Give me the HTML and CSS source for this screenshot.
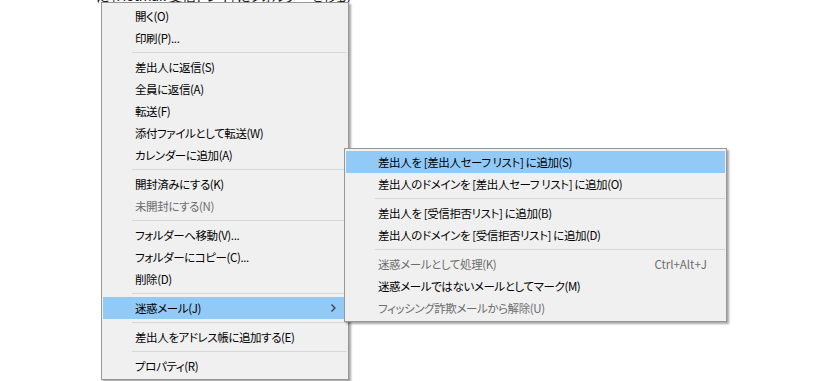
FILE: index.html
```
<!DOCTYPE html>
<html lang="ja">
<head>
<meta charset="utf-8">
<link rel="stylesheet" href="styles.css">
</head>
<body>
<div class="desk">
  <div class="bgline">に [Hotmail 受信トレイ] にフォルダーを移動</div>

  <div class="menu main-menu">
    <div class="item">開く(O)</div>
    <div class="item">印刷(P)...</div>
    <div class="sep"></div>
    <div class="item">差出人に返信(S)</div>
    <div class="item">全員に返信(A)</div>
    <div class="item">転送(F)</div>
    <div class="item">添付ファイルとして転送(W)</div>
    <div class="item">カレンダーに追加(A)</div>
    <div class="sep"></div>
    <div class="item">開封済みにする(K)</div>
    <div class="item disabled">未開封にする(N)</div>
    <div class="sep"></div>
    <div class="item">フォルダーへ移動(V)...</div>
    <div class="item">フォルダーにコピー(C)...</div>
    <div class="item">削除(D)</div>
    <div class="sep"></div>
    <div class="item active has-sub">迷惑メール(J)
      <svg class="chev" width="5" height="8" viewBox="0 0 5 8"><path d="M0.5 0.5 L4 4 L0.5 7.5" fill="none" stroke="#333" stroke-width="1.1"/></svg>
    </div>
    <div class="sep"></div>
    <div class="item">差出人をアドレス帳に追加する(E)</div>
    <div class="sep"></div>
    <div class="item">プロパティ(R)</div>
  </div>

  <div class="menu sub-menu">
    <div class="item active">差出人を [差出人セーフ リスト] に追加(S)</div>
    <div class="item">差出人のドメインを [差出人セーフ リスト] に追加(O)</div>
    <div class="sep"></div>
    <div class="item">差出人を [受信拒否リスト] に追加(B)</div>
    <div class="item">差出人のドメインを [受信拒否リスト] に追加(D)</div>
    <div class="sep"></div>
    <div class="item disabled"><span>迷惑メールとして処理(K)</span><span class="key">Ctrl+Alt+J</span></div>
    <div class="item">迷惑メールではないメールとしてマーク(M)</div>
    <div class="item disabled">フィッシング詐欺メールから解除(U)</div>
  </div>
</div>
</body>
</html>
```
FILE: styles.css
```
html, body {
  margin: 0;
  padding: 0;
  background: #ffffff;
}
body {
  width: 831px;
  height: 381px;
  overflow: hidden;
  font-family: "Noto Sans CJK JP", "Noto Sans", sans-serif;
  font-size: 11.5px;
  letter-spacing: -0.4px;
  font-feature-settings: "palt";
  color: #000;
}
.desk {
  position: relative;
  width: 831px;
  height: 381px;
  overflow: hidden;
}
.bgline {
  position: absolute;
  left: 96px;
  top: -13px;
  font-size: 14px;
  line-height: 16px;
  color: #1a1a1a;
  white-space: nowrap;
}
.menu {
  position: absolute;
  box-sizing: border-box;
  background: #f0f0f0;
  border: 1px solid #979797;
  padding: 2px 1px;
  box-shadow: 2px 2px 2px rgba(0, 0, 0, 0.35);
  display: flex;
  flex-direction: column;
}
.main-menu {
  left: 101px;
  top: 2px;
  width: 248px;
}
.sub-menu {
  left: 344px;
  top: 148px;
  width: 383px;
}
.item {
  height: 22px;
  line-height: 22px;
  padding: 0 18px 0 32px;
  white-space: nowrap;
  display: flex;
  align-items: center;
  justify-content: space-between;
}
.item.active {
  background: #91c9f7;
}
.item.disabled {
  color: #6d6d6d;
}
.has-sub {
  padding-right: 11px;
}
.sep {
  height: 1px;
  background: #d7d7d7;
  margin: 3px 0 3px 29px;
}
.key {
  color: #6d6d6d;
  letter-spacing: 0;
}
.chev {
  display: block;
}
```
